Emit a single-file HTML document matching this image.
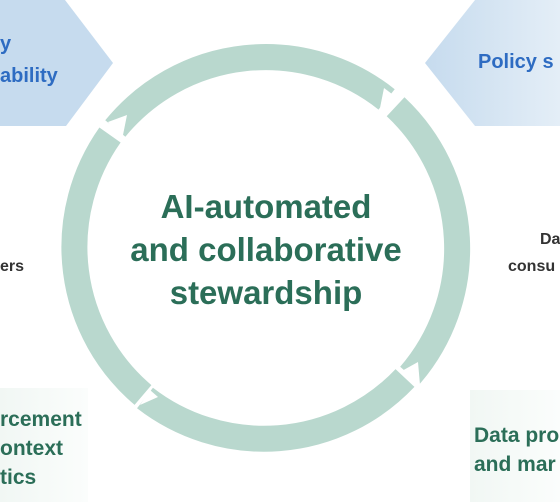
<!DOCTYPE html>
<html><head><meta charset="utf-8"><style>
html,body{margin:0;padding:0;width:560px;height:502px;overflow:hidden;background:#fff;font-family:"Liberation Sans",sans-serif;}
.t{position:absolute;white-space:nowrap;font-weight:bold;}
.b{color:#2e6cc2;font-size:20px;}
.g{color:#2b6e58;font-size:21px;}
.d{color:#333;font-size:16px;}
</style></head><body>
<svg width="560" height="502" style="position:absolute;left:0;top:0">
<defs>
<linearGradient id="rg" x1="0" x2="1"><stop offset="0" stop-color="#c6dbee"/><stop offset="1" stop-color="#e4eef7"/></linearGradient>
<linearGradient id="gg" x1="0" x2="1"><stop offset="0" stop-color="#f1f7f4"/><stop offset="1" stop-color="#fbfdfc"/></linearGradient>
</defs>
<polygon points="0,0 65,0 113,63 66,126 0,126" fill="#c6dbee"/>
<polygon points="475,0 560,0 560,126 475,126 425,63" fill="url(#rg)"/>
<rect x="0" y="388" width="88" height="114" fill="url(#gg)"/>
<rect x="470" y="390" width="90" height="112" fill="url(#gg)"/>
<g fill="none" stroke="#b9d8ce" stroke-width="26">
<path d="M 115.3 128.5 A 194 194 0 0 1 386.6 99.4"/>
<path d="M 395.6 106.8 A 194 194 0 0 1 410.0 375.3"/>
<path d="M 405 378 A 194 194 0 0 1 145 398"/>
<path d="M 143 395 A 194 194 0 0 1 110 135"/>
</g>
<g fill="#fff">
<polygon points="108,122 122,140 127,115"/>
<polygon points="384,88 400,100 380,108"/>
<polygon points="418,362 400,372 420,385"/>
<polygon points="158,397 140,405 150,390"/>
</g>
</svg>
<div class="t b" style="left:0;top:33px">y</div>
<div class="t b" style="left:0;top:65px">ability</div>
<div class="t b" style="left:478px;top:51px">Policy s</div>
<div class="t d" style="left:0;top:258px">ers</div>
<div class="t d" style="left:540px;top:231px">Da</div>
<div class="t d" style="left:508px;top:258px">consu</div>
<div class="t g" style="left:0;top:408px">rcement</div>
<div class="t g" style="left:0;top:437px">ontext</div>
<div class="t g" style="left:0;top:466px">tics</div>
<div class="t g" style="left:474px;top:424px">Data pro</div>
<div class="t g" style="left:474px;top:453px">and mar</div>
<div class="t" style="left:66px;width:400px;top:185px;text-align:center;color:#2b6e58;font-size:33px;line-height:43px">AI-automated<br>and collaborative<br>stewardship</div>
</body></html>
